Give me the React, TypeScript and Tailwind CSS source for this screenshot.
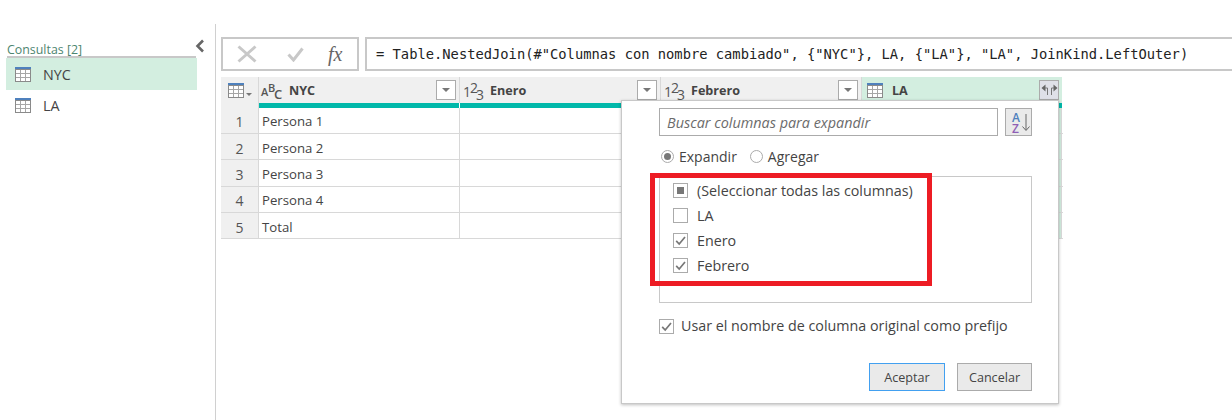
const ui = "font-['Open_Sans','Noto_Sans',sans-serif]";

function TableIcon({ className = "" }: { className?: string }) {
  return (
    <svg width="16" height="15" viewBox="0 0 16 15" className={className}>
      <rect x="0" y="0" width="16" height="3" fill="#4f81bd" />
      <rect x="0.5" y="2.5" width="15" height="12" fill="#fff" stroke="#8a8a8a" />
      <path d="M5.5 3v11M10.5 3v11M1 6.5h14M1 10.5h14" stroke="#a6a6a6" fill="none" />
    </svg>
  );
}

function Drop() {
  return (
    <span className="flex h-5 w-5 shrink-0 items-center justify-center border border-[#ababab] bg-white">
      <span className="h-0 w-0 border-x-[4px] border-t-[4px] border-x-transparent border-t-[#777]" />
    </span>
  );
}

function TypeAbc() {
  return (
    <span className={`relative h-5 w-5 shrink-0 text-[#555] ${ui} font-semibold`}>
      <span className="absolute left-0 top-[6px] text-[11px] leading-[11px]">A</span>
      <span className="absolute left-[7px] top-[2px] text-[11px] leading-[11px]">B</span>
      <span className="absolute left-[13px] top-[8px] text-[13px] leading-[13px]">C</span>
    </span>
  );
}

function Type123() {
  return (
    <span className={`relative h-5 w-5 shrink-0 text-[#555] ${ui} text-[14px]`}>
      <span className="absolute left-[1px] top-[5px] leading-[13px]">1</span>
      <span className="absolute left-[8px] top-[1px] leading-[13px]">2</span>
      <span className="absolute left-[14px] top-[8px] leading-[13px]">3</span>
    </span>
  );
}

function Check({ state }: { state: "on" | "off" | "mixed" }) {
  return (
    <span className="flex h-[15px] w-[15px] shrink-0 items-center justify-center border border-[#ababab] bg-white">
      {state === "mixed" && <span className="h-[7px] w-[7px] bg-[#777]" />}
      {state === "on" && (
        <svg width="13" height="13" viewBox="0 0 13 13">
          <path d="M2.2 6.8l3 3.2 5.8-7" fill="none" stroke="#777" strokeWidth="1.7" />
        </svg>
      )}
    </span>
  );
}

const rows = ["Persona 1", "Persona 2", "Persona 3", "Persona 4", "Total"];
const rowH = ["h-[26px]", "h-[26px]", "h-[27px]", "h-[26px]", "h-[26px]"];
const rowPt = ["pt-[2px]", "pt-[4px]", "pt-[3px]", "pt-[2px]", "pt-[4px]"];

function HeaderCell({ name, type }: { name: string; type: "abc" | "123" }) {
  return (
    <div className="flex h-[26px] w-[201px] items-center border-r border-[#d8d8d8] bg-[#f0f0f0] pl-[2px] pr-[3px]">
      {type === "abc" ? <TypeAbc /> : <Type123 />}
      <span className="ml-[8px] flex-1 pt-[2px] text-[12.6px] font-bold text-[#444]">{name}</span>
      <Drop />
    </div>
  );
}

export default function App() {
  const rowItems: { label: string; state: "on" | "off" | "mixed" }[] = [
    { label: "(Seleccionar todas las columnas)", state: "mixed" },
    { label: "LA", state: "off" },
    { label: "Enero", state: "on" },
    { label: "Febrero", state: "on" },
  ];
  return (
    <div className={`relative flex h-[420px] w-[1232px] overflow-hidden bg-white ${ui} text-[#444]`}>
      <aside className="mt-[24px] h-[396px] w-[216px] shrink-0 border-r border-[#d0d0d0]">
        <div className="relative ml-[7px] mr-[19px] mt-[16px] flex h-[18px] items-center border-b-2 border-[#c8c8c8] pt-[5px] text-[12.4px] text-[#4d8570]">
          Consultas [2]
          <svg width="10" height="14" viewBox="0 0 10 14" className="absolute -right-[9px] top-[-1px]">
            <path d="M8 1.5L2.5 7 8 12.5" fill="none" stroke="#666" strokeWidth="2.6" />
          </svg>
        </div>
        <div className="ml-[6px] mr-[18px] flex h-[32px] items-center bg-[#d3eee0] pl-[9px] text-[14.3px] text-[#444]">
          <TableIcon />
          <span className="ml-[12px] pt-[2px]">NYC</span>
        </div>
        <div className="ml-[6px] mr-[18px] flex h-[30px] items-center pl-[9px] text-[14.3px] text-[#444]">
          <TableIcon />
          <span className="ml-[12px] pt-[2px]">LA</span>
        </div>
      </aside>

      <main className="min-w-0 flex-1 pl-[5px] pt-[37px]">
        <div className="flex h-[34px] gap-[6px]">
          <div className="flex h-[34px] w-[138px] shrink-0 items-center border-2 border-[#c8c8c8] bg-white">
            <svg width="20" height="18" viewBox="0 0 20 18" className="ml-[14px]">
              <path d="M1.5 1.5l17 15M18.5 1.5l-17 15" stroke="#c8c8c8" strokeWidth="3" fill="none" />
            </svg>
            <svg width="17" height="15" viewBox="0 0 17 15" className="ml-[30px]">
              <path d="M1.5 7.5l5 5.5L15.5 1.5" stroke="#c8c8c8" strokeWidth="3" fill="none" />
            </svg>
            <span className="ml-[24px] font-['Liberation_Serif',serif] text-[20px] italic leading-none text-[#666]">fx</span>
          </div>
          <div className="flex h-[34px] flex-1 items-center border-y-2 border-l-2 border-[#c8c8c8] pl-[9px] font-['DejaVu_Sans_Mono',monospace] text-[13.77px] text-[#222] whitespace-pre">
            {'= Table.NestedJoin(#"Columnas con nombre cambiado", {"NYC"}, LA, {"LA"}, "LA", JoinKind.LeftOuter)'}
          </div>
        </div>

        <div className="mt-[6px] w-[842px] text-[13.2px]">
          <div className="flex h-[26px]">
            <div className="flex h-[26px] w-[38px] shrink-0 items-center border-r border-[#d8d8d8] bg-[#f0f0f0] pl-[7px]">
              <TableIcon />
              <span className="ml-[2px] mt-[8px] h-0 w-0 border-x-[3px] border-t-[3px] border-x-transparent border-t-[#777]" />
            </div>
            <HeaderCell name="NYC" type="abc" />
            <HeaderCell name="Enero" type="123" />
            <HeaderCell name="Febrero" type="123" />
            <div className="flex h-[26px] w-[200px] items-center bg-[#d3eee0] pl-[5px] pr-[3px]">
              <TableIcon />
              <span className="ml-[9px] flex-1 pt-[2px] text-[12.6px] font-bold text-[#444]">LA</span>
              <span className="flex h-5 w-5 items-center justify-center border border-[#ababab] bg-[#dfe0e8]">
                <svg width="17" height="12" viewBox="0 0 17 12">
                  <path d="M0.5 4L4.5 0.5v7zM16.5 4L12.5 0.5v7z" fill="#666" />
                  <path d="M4 4h2.5v7M13 4h-2.5v7" fill="none" stroke="#777" />
                </svg>
              </span>
            </div>
          </div>
          <div className="flex h-[5px]">
            <div className="w-[38px] shrink-0 border-r border-[#d8d8d8] bg-[#f0f0f0]" />
            {[201, 201, 201, 200].map((w, i) => (
              <div key={i} style={{ width: w }} className={`bg-[#01b8aa] ${i < 3 ? "border-r border-white" : ""}`} />
            ))}
          </div>
          {rows.map((r, i) => (
            <div key={r} className={`flex ${rowH[i]} border-b border-[#d8d8d8]`}>
              <div className={`flex w-[38px] shrink-0 items-center justify-center border-r border-[#d8d8d8] bg-[#f0f0f0] ${rowPt[i]} text-[14px] text-[#555]`}>
                {i + 1}
              </div>
              <div className={`flex w-[201px] items-center border-r border-[#d8d8d8] pl-[3px] ${rowPt[i]} text-[#444]`}>{r}</div>
              <div className="w-[201px] border-r border-[#d8d8d8]" />
              <div className="w-[201px] border-r border-[#d8d8d8]" />
              <div className="w-[200px] border-r border-[#d8d8d8] bg-[#d3eee0]" />
            </div>
          ))}
        </div>
      </main>

      <section className="absolute left-[621px] top-[100px] h-[304px] w-[438px] border border-[#c8c8c8] bg-white pl-[37px] pr-[26px] pt-[7px] shadow-[0_1px_3px_rgba(0,0,0,0.25)]">
        <div className="flex h-[28px] gap-[7px]">
          <div className="flex flex-1 items-center border border-[#ababab] px-[7px] pt-[2px] text-[14.4px] italic text-[#6b6b6b]">
            Buscar columnas para expandir
          </div>
          <div className="relative h-[28px] w-[27px] border border-[#ababab] bg-[#eaeaea]">
            <span className="absolute left-[6px] top-[3px] text-[12px] font-semibold leading-[11px] text-[#4f81bd]">A</span>
            <span className="absolute left-[6px] top-[14px] text-[12px] font-semibold leading-[11px] text-[#8e5fb5]">Z</span>
            <svg width="8" height="18" viewBox="0 0 8 18" className="absolute left-[16px] top-[5px]">
              <path d="M4 0v16M0.5 12.5L4 16.5l3.5-4" fill="none" stroke="#666" />
            </svg>
          </div>
        </div>

        <div className="mt-[9px] flex h-[22px] items-center pl-[2px] text-[14px]">
          <span className="flex h-[13px] w-[13px] items-center justify-center rounded-full border border-[#ababab]">
            <span className="h-[7px] w-[7px] rounded-full bg-[#777]" />
          </span>
          <span className="ml-[5px]">Expandir</span>
          <span className="ml-[13px] h-[13px] w-[13px] rounded-full border border-[#ababab]" />
          <span className="ml-[5px]">Agregar</span>
        </div>

        <div className="mt-[9px] h-[127px] border border-[#c8c8c8] pl-[13px] pt-[1px] text-[14.3px]">
          {rowItems.map((it) => (
            <div key={it.label} className="flex h-[25px] items-center">
              <Check state={it.state} />
              <span className="ml-[9px]">{it.label}</span>
            </div>
          ))}
        </div>

        <div className="mt-[13px] flex h-[20px] items-center text-[14.3px]">
          <Check state="on" />
          <span className="ml-[7px]">Usar el nombre de columna original como prefijo</span>
        </div>

        <div className="mt-[27px] flex justify-end gap-[12px] text-[12.6px]">
          <button className="h-[28px] w-[76px] border border-[#42a0f0] bg-[#eaeaea] pt-[2px] text-[#444]">Aceptar</button>
          <button className="h-[28px] w-[75px] border border-[#ababab] bg-[#eaeaea] pt-[2px] text-[#444]">Cancelar</button>
        </div>
      </section>

      <div className="pointer-events-none absolute left-[650px] top-[173px] h-[113px] w-[282px] border-[5px] border-[#ed1c24]" />
    </div>
  );
}
